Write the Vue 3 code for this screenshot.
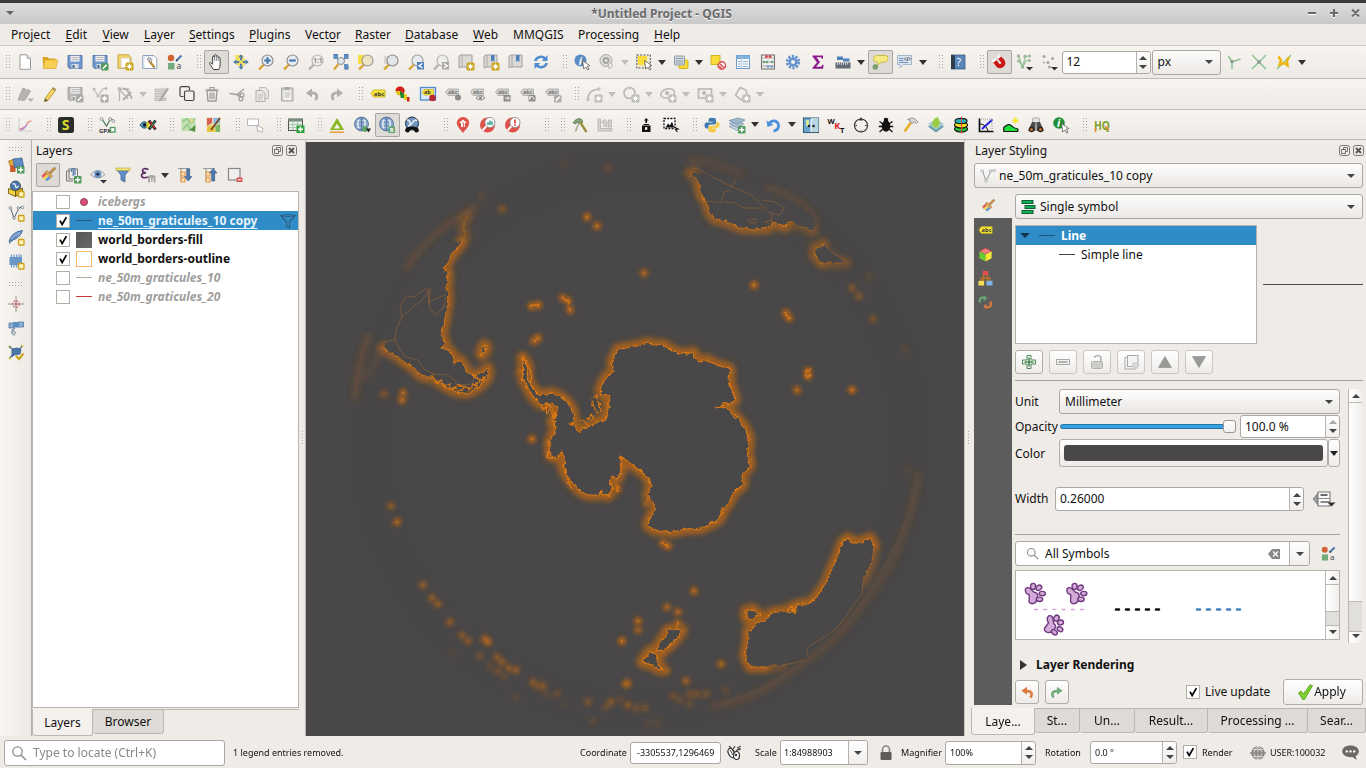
<script setup>
// ---------- icon fragments, all on a 16 x 16 grid ----------
const star = (c = '#c9a21b') => `<rect x="8.5" y="8.500" width="8" height="8" rx="1.500" fill="${c}"/><path d="M12.500 9.700v5.600M9.700 12.500h5.600M10.600 10.600l3.800 3.800M14.400 10.600l-3.800 3.800" stroke="#fff" stroke-width="1"/>`
const plus = '<rect x="9" y="9" width="7.500" height="7.500" rx="1" fill="#4f9a5c"/><path d="M12.750 10.300v5M10.250 12.800h5" stroke="#fff" stroke-width="1.500"/>'
const pencil = c => `<rect x="9" y="9" width="7.500" height="7.500" rx="1.500" fill="${c}"/><path d="M10.800 14.700l3.800-3.800" stroke="#fff" stroke-width="1.600"/>`
const ybox = '<rect x="10.500" y="10.500" width="5.500" height="5.500" rx=".8" fill="#fdf3b4" stroke="#c9a21b" stroke-width="1.300"/>'
const cursor = '<path d="M8.500 6.500l1.200 8.500 2-2 2 3 1.300-.9-1.900-2.800 2.600-.8z" fill="#fff" stroke="#555" stroke-width=".8"/>'
const floppy = (a, b) => `<path d="M1 1.500h14v13H2.500L1 13z" fill="${a}" stroke="${b}" stroke-width=".8"/><rect x="3.500" y="1.800" width="9" height="5.700" fill="#eee"/><path d="M4.500 3.500h7M4.500 5.500h7" stroke="#aaa" stroke-width=".8"/><rect x="4.500" y="10" width="7" height="4.500" fill="#d8dadd"/><rect x="5.500" y="11" width="2" height="3" fill="${b}"/>`
const lens = (fill, stroke, handle, inner = '') => `<path d="M6 10.500L1 15.500" stroke="${handle}" stroke-width="2.400"/><circle cx="9.500" cy="6.500" r="5.500" fill="${fill}" stroke="${stroke}" stroke-width="1.100"/>${inner}`
const tag = (x = 0, g = '#d3d1ce', s = '#aaa', t = '#777') => `<path d="M${x + 0.500} 6l2.500-3h10.500v6.500H${x + 3}z" fill="${g}" stroke="${s}" stroke-width=".8"/><text x="${x + 3}" y="8" font-size="5.500" font-weight="700" fill="${t}">abc</text>`
const page = (x, y, c) => `<path d="M${x} ${y}h6l3 3v8h-9z" fill="#e9e7e4" stroke="${c}" stroke-width="1"/>`
const down = '<path d="M10 13h7l-3.500 3.500z" fill="#333"/>'
const globe = (f, s) => `<circle cx="7.500" cy="7" r="6.900" fill="${f}" stroke="${s}" stroke-width=".9"/><path d="M1 7h13M2.500 3.500h10M2.500 10.500h10" fill="none" stroke="#b9cce0" stroke-width=".7"/><path d="M5 2.500q-2.500 4.500 0 9M10 2.500q2.500 4.500 0 9" fill="none" stroke="#e6eef6" stroke-width="1.500"/><path d="M7.500.5v13" stroke="${s}" stroke-width=".8"/>`
const brush = '<g transform="rotate(45 8 8)"><path d="M6.900-1.500q1.100-1.500 2.200 0V6H6.900z" fill="#c98f4a" stroke="#96642c" stroke-width=".5"/><path d="M4 5.500h8v3H4z" fill="#d9a663" stroke="#96642c" stroke-width=".5"/><path d="M4 8.500h2.700V14L4 13z" fill="#e25a55"/><path d="M6.700 8.500h2.600v5l-2.600.8z" fill="#f2d84f"/><path d="M9.300 8.500H12v4l-2.700 1.200z" fill="#5f97d8"/></g>'
const styleMgr = '<circle cx="4" cy="4" r="3.200" fill="#cf6234"/><rect x="1" y="9" width="6.500" height="6.500" fill="#74ab7c"/><path d="M9 7l5.500-5.500" stroke="#4a78ad" stroke-width="2.200"/><path d="M9 7l2-.3-1.500-1.500z" fill="#333"/><text x="9.500" y="15.200" font-size="8.500" fill="#444">a</text>'
const vee = c => `<path d="M2.500 3L6 13 11 3l3-1" fill="none" stroke="${c}" stroke-width="1"/><circle cx="2.300" cy="3" r="1.300" fill="#fff" stroke="${c}" stroke-width=".7"/><circle cx="6" cy="13" r="1.300" fill="#fff" stroke="${c}" stroke-width=".7"/><circle cx="10.500" cy="3" r="1.300" fill="#fff" stroke="${c}" stroke-width=".7"/><circle cx="14.500" cy="2.500" r="1.300" fill="#fff" stroke="${c}" stroke-width=".7"/>`
const fourDots = '<g fill="#d9d441"><circle cx="2" cy="3" r="1.500"/><circle cx="14" cy="2" r="1.500"/><circle cx="2" cy="14" r="1.500"/></g>'

const G = '#a9a7a4'
const icons = {
  newp: '<path d="M3 .8h7l3.500 3.500v11H3z" fill="#fff" stroke="#999" stroke-width="1"/><path d="M10 .8v3.500h3.500" fill="#ddd" stroke="#999" stroke-width=".8"/>',
  open: '<path d="M.5 3h5l1.500 1.500h6.500V14H1.500z" fill="#d9a420"/><path d="M3 6h12.800l-2 8.500H1.300z" fill="#f8cf52" stroke="#dba92c" stroke-width=".7"/>',
  save: floppy('#7199cf', '#45699a'),
  saveas: floppy('#7199cf', '#45699a') + pencil('#4f9a5c'),
  laynew: '<path d="M1 .8h10.500l2.500 3v10.500H1z" fill="#f4d667" stroke="#b99628" stroke-width=".8"/><rect x="4" y="4" width="8.500" height="9.500" fill="#fff" stroke="#c9c9c9" stroke-width=".7"/>' + star(),
  laymgr: '<path d="M.8 1.500h11l3 3v10H.8z" fill="#fff" stroke="#8ba3bf" stroke-width="1"/><path d="M2 13V3h9" stroke="#b9cbe0" fill="none" stroke-width="1.200" stroke-dasharray="1 1"/><path d="M7 6.500l5.500 7" stroke="#b98e2d" stroke-width="2.300"/><path d="M5 5.500a2.500 2.500 0 1 1 3.500 3L6.500 6z" fill="#c9cdd2" stroke="#777" stroke-width=".7"/>',
  style: styleMgr,
  hand: '<path d="M5.500 15.500L1.800 10c-.8-1.400.8-2 1.600-.9l1.200 1.200V3c0-1.300 1.700-1.300 1.800 0V1.500c.1-1.200 1.800-1.200 1.900 0v1c.2-1.100 1.800-1 1.900.2V4c.3-1 1.900-.9 1.900.3V11c0 2-.8 3-1.300 4.500z" fill="#fff" stroke="#333" stroke-width=".9"/><path d="M6.400 3v4M8.300 2.500V7M10.200 4v3" stroke="#555" stroke-width=".7"/>',
  pan: '<path d="M2 1h8l3 8-4 5-6-4z" fill="#f3df62"/><path d="M8 .2l2.600 3.300H5.400zM8 15.800l2.600-3.300H5.400zM.2 8l3.300-2.600v5.200zM15.800 8l-3.300-2.600v5.200z" fill="#4d78ab"/><path d="M8 3.500v2.800M8 9.800v2.700M3.500 8h2.800M9.800 8h2.700" stroke="#4d78ab" stroke-width="2"/>',
  zin: lens('#e5ecf3', '#888', '#d8a432', '<path d="M9.500 3.200v6.600M6.200 6.500h6.600" stroke="#4677ad" stroke-width="2.200"/>'),
  zout: lens('#e5ecf3', '#888', '#d8a432', '<path d="M6.200 6.500h6.600" stroke="#4677ad" stroke-width="2.200"/>'),
  z11: lens('#efedeb', '#b5b3b0', '#b5b3b0', '<text x="5.300" y="9" font-size="6.500" font-weight="700" fill="#8d8b88">1:1</text>'),
  zfull: '<path d="M.5 0h5l-5 5zM15.500 0v5l-5-5zM15.500 15.500h-5l5-5z" fill="#4778b0"/><g fill="#5e8bc0"><rect x="1" y="1" width="4" height="4"/><rect x="11" y="1" width="4" height="4"/><rect x="11" y="10" width="4" height="4"/></g><circle cx="8" cy="7" r="3.500" fill="#dfe6ec" stroke="#888"/><path d="M5.500 10l-4.500 5.500" stroke="#d8a432" stroke-width="2.200"/>',
  zsel: '<rect x="0" y="1" width="9" height="9" fill="#f6de45"/>' + lens('#ebe4c3', '#999', '#d8a432'),
  zlay: '<path d="M1 2h7v8H1z" fill="#ccc" opacity=".7"/>' + lens('#e3e6e8', '#888', '#d8a432'),
  zlast: lens('#e9ebed', '#999', '#d8a432', '<rect x="9" y="8" width="7" height="7.500" fill="#5083bd"/><path d="M14.500 9.500l-3.500 2.200 3.500 2.300" fill="none" stroke="#fff" stroke-width="1.400"/>'),
  znext: lens('#efedeb', '#b5b3b0', '#b5b3b0', '<rect x="9" y="8" width="7" height="7.500" fill="#aaa8a5"/><path d="M10.800 9.500l3.500 2.200-3.500 2.300" fill="none" stroke="#fff" stroke-width="1.400"/>'),
  map1: '<path d="M1 2l2-1h11v12H3l-2 1z" fill="#dcdad7" stroke="#999" stroke-width=".9"/><path d="M4 1v12" stroke="#aaa"/>' + star(),
  map2: '<path d="M1 2l2-1h11v12H3l-2 1z" fill="#dcdad7" stroke="#999" stroke-width=".9"/><path d="M4 1v12" stroke="#aaa"/><path d="M8 1h3.500v7L9.700 6.500 8 8z" fill="#4d7fba"/>' + star(),
  map3: '<path d="M1 2l2-1h11v12H3l-2 1z" fill="#dcdad7" stroke="#999" stroke-width=".9"/><path d="M4 1v12" stroke="#aaa"/><path d="M8 1h3.500v7L9.700 6.500 8 8z" fill="#4d7fba"/>',
  refresh: '<path d="M2.300 7A5.800 5.800 0 0 1 12 4.500M13.700 9A5.800 5.800 0 0 1 4 11.500" fill="none" stroke="#4f8ccd" stroke-width="2.600"/><path d="M14.500 1v6H8.800zM1.500 15V9h5.700z" fill="#4f8ccd"/>',
  ident: '<circle cx="6.500" cy="6.500" r="6" fill="#5a8bc2"/><text x="4.800" y="10.500" font-size="10.500" font-weight="700" font-style="italic" fill="#fff">i</text>' + cursor,
  action: '<circle cx="7" cy="6.500" r="6" fill="#dedcd9" stroke="#aaa"/><circle cx="7" cy="6.500" r="2.500" fill="none" stroke="#999" stroke-width="1.500"/><path d="M9 7l1 8 4-3z" fill="#eee" stroke="#aaa" stroke-width=".8"/>',
  select: '<rect x=".8" y="1" width="13.500" height="13" fill="#f0ead0" stroke="#555" stroke-width="1.100" stroke-dasharray="2 1.300"/><path d="M2 2h9v9H2z" fill="#f8dd36"/>' + cursor,
  selval: '<rect x="6" y="6" width="9" height="8.500" rx="1" fill="#f8dd36" stroke="#cfae1f"/><rect x="1.500" y="2" width="10" height="9" rx="1" fill="#d5d8da" stroke="#8b98a5"/><path d="M3 4.500h7M3 7h7M3 9h7" stroke="#8da0b3"/>',
  desel: '<rect x="1" y="1.500" width="9" height="9" fill="#f8dd36" stroke="#cfae1f" stroke-width=".9"/><circle cx="11.800" cy="11.500" r="3.700" fill="#fff" stroke="#d9474b" stroke-width="1.400"/><path d="M9.500 9.500l4.600 4M9.200 12l2.600 2.500" stroke="#d9474b" stroke-width="1.300"/>',
  table: '<rect x="1.500" y="1.500" width="13" height="13" fill="#fff" stroke="#6a9bc9" stroke-width="1"/><rect x="1.500" y="1.500" width="13" height="3.500" fill="#7fb1dd"/><path d="M3 7.500h3M3 10h3M3 12.500h3M8 7.500h5M8 10h5M8 12.500h5" stroke="#88acd0" stroke-width="1.200"/><path d="M6.800 1.500v13" stroke="#a9c7e2"/>',
  abacus: '<rect x="1.500" y="1" width="13" height="14" fill="none" stroke="#777" stroke-width="1.100"/><path d="M2 4h12M2 8h12M2 12h12" stroke="#999" stroke-width=".8"/><g fill="#d9474b"><circle cx="6.500" cy="2.500" r="1.500"/><circle cx="10" cy="2.500" r="1.500"/></g><g fill="#62a476"><circle cx="4" cy="8" r="1.300"/><circle cx="7" cy="8" r="1.300"/><circle cx="12" cy="8" r="1.300"/></g><g fill="#6797cc"><circle cx="8" cy="12.500" r="1.300"/><circle cx="11.500" cy="12.500" r="1.300"/></g>',
  gear: '<circle cx="8" cy="8" r="5.600" fill="none" stroke="#6796cf" stroke-width="3.200" stroke-dasharray="2.200 1.300"/><circle cx="8" cy="8" r="4.600" fill="#6796cf"/><circle cx="8" cy="8" r="2" fill="#f2efec"/>',
  sigma: '<path d="M2.500 1.500h10.500v3.300h-1.300c-.2-1.200-.7-1.500-2-1.500H6.500L10 8l-4 4.700h4c1.500 0 2-.5 2.300-1.900h1.300l-.5 4H2.500v-1L7 8.500 2.500 2.600z" fill="#8b1a8b"/>',
  measure: '<rect x=".5" y="8.500" width="15" height="6" fill="#636b75"/><path d="M2.500 8.500v2.500M4.500 8.500v2M6.500 8.500v2.500M8.500 8.500v2M10.500 8.500v2.500M12.500 8.500v2" stroke="#fff" stroke-width=".7"/><path d="M2 2.500h6v2h6.500v3H8V6H2z" fill="#4f80b7"/>',
  tip: '<path d="M4.500 1.500h9q2.500 0 2.500 2.700T13.500 8H9.500L5 11.500 6 8H4Q1.500 8 1.500 4.800T4.500 1.500z" fill="#f6ea82" stroke="#c9ba3d" stroke-width=".9"/><circle cx="3.300" cy="13" r="2.300" fill="#7aa874" stroke="#557f52" stroke-width=".7"/>',
  html: '<path d="M.5 1.500h14v9h-8L3 14v-3.500H.5z" fill="#dce6f1" stroke="#9ab0c7" stroke-width=".9"/><path d="M2 4.500h4.500M2 6.500h4.500M2 8.500h9" stroke="#6d93bd"/><path d="M9 3.500L7.500 5 9 6.500M12 3.500L13.500 5 12 6.500M11 3l-1 4" stroke="#333" stroke-width=".8" fill="none"/>',
  help: '<rect x="1.500" y="1" width="13.500" height="14" fill="#5886bd" stroke="#3d5d85" stroke-width=".8"/><rect x="1" y="1" width="4" height="14" fill="#2e3d50"/><text x="6.500" y="12" font-size="10.500" fill="#fff">?</text>',
  magnet: '<path d="M3.300 6.500l3.400 4.600a3.200 3.200 0 0 0 4.800-4.300L8 3" fill="none" stroke="#cb1515" stroke-width="4"/><path d="M1.500 7.500l3.500-2.200M6.300 4.200l3.200-2.600" stroke="#fff" stroke-width="2.200"/>',
  snapv: '<g fill="#a7b0a7"><circle cx="2.500" cy="2" r="1.700"/><circle cx="2.500" cy="7" r="1.500"/><circle cx="9" cy="2.500" r="1.700"/><circle cx="13.500" cy="2" r="1.600"/><circle cx="13.500" cy="6.500" r="1.500"/><circle cx="6.500" cy="13" r="1.800"/></g><path d="M2.500 2l4 11 3-10.500L14 2M3 7l3.500 6 4-6.500h3" fill="none" stroke="#8fbf94" stroke-width="1.100"/>' + down,
  dots: '<g fill="#aaa8a5"><circle cx="3" cy="2.500" r="1.600"/><circle cx="11.500" cy="4.500" r="1.600"/><circle cx="7" cy="8.500" r="1.600"/><circle cx="3" cy="8.500" r="1"/><circle cx="8.500" cy="13" r="1.600"/></g>' + down,
  topo: '<path d="M6 15V8L2.500 2M6 8l8.500-3" fill="none" stroke="#8cc492" stroke-width="1.600"/><circle cx="6" cy="7.500" r="1.800" fill="#999"/>',
  inter: '<path d="M1 1l14 14M15 1L1 15" stroke="#8cc492" stroke-width="1.500"/><circle cx="8" cy="8" r="2" fill="#999"/>',
  trace: '<path d="M15 1L1 15" stroke="#8cc492" stroke-width="1.400"/><path d="M2.500 2.500L5 6.500 3.500 10.500 8 9l3.500 2.500L11 7l2-4" fill="none" stroke="#efb50c" stroke-width="2.400"/>',
  // row 2
  edits: '<path d="M1 14L6 2l3 1.500L4 14zM5 14.500l5.500-11 3 1.500L8 14z" fill="#b7b5b2" stroke="#9d9b98" stroke-width=".8"/><path d="M10.500 12.500h6.500l-3.200 3.500z" fill="#b5b3b0"/>',
  edit: '<path d="M3 12.500L11 1.500l3 2-8 11-3.500 1.200z" fill="#f3d35c" stroke="#b08f27" stroke-width=".8"/><path d="M11 1.500l3 2-1 1.500-3-2z" fill="#a98a66"/><path d="M3 12.500l3 2-3.500 1.200z" fill="#555"/>',
  saveE: floppy('#b9b7b4', '#999') + pencil(G),
  addf: '<path d="M2 3l4 7 5-7 3-1" fill="none" stroke="#bbb" stroke-width="1.200"/><g fill="#bbb"><circle cx="2" cy="3" r="1.500"/><circle cx="14" cy="2.500" r="1.500"/><circle cx="6" cy="10" r="1.500"/></g>' + star('#aaa'),
  vtool: '<path d="M2.500 3v12M3 3h10M3 4l8 9" stroke="#b5b3b0" stroke-width="1.200" fill="none"/><path d="M6 2.500l4 1 5 9M14 6l-8 8" stroke="#b0aeab" stroke-width="1.900" fill="none"/><circle cx="2.500" cy="3" r="2" fill="#bbb"/>',
  multi: '<path d="M1 3h11v3H1zM1 7.500h9v3H1zM1 12h11v2.500H1z" fill="#d4d2cf" stroke="#b5b3b0" stroke-width=".7"/><path d="M5 14L13 1.500l2 1.300L7.500 14.500l-3 1z" fill="#aaa"/>',
  copyf: '<path d="M4.500 10.500H2.500Q1 10.500 1 9V2Q1 .7 2.500.7H9q1.500 0 1.500 1.500v2" fill="none" stroke="#444" stroke-width="1.200"/><rect x="5.500" y="5" width="9.500" height="9.500" rx="1.500" fill="none" stroke="#444" stroke-width="1.200"/>',
  del: '<path d="M3 4.500h10l-1 10.500H4z" fill="none" stroke="#9b9996" stroke-width="1.300"/><path d="M1.500 4h13M6 3.500V1.500h4v2M6 6.500v6.500M8 6.500v6.500M10 6.500v6.500" fill="none" stroke="#9b9996" stroke-width="1.200"/>',
  cut: '<path d="M.5 7.500L11 9M15 3L8 8.500l3 3" stroke="#a09e9b" stroke-width="1.300" fill="none"/><circle cx="13" cy="9" r="1.900" fill="none" stroke="#a09e9b" stroke-width="1.200"/><circle cx="12" cy="13" r="1.900" fill="none" stroke="#a09e9b" stroke-width="1.200"/>',
  copy: page(5.500, 1.500, '#bbb') + page(2, 4.500, '#b3b1ae') + '<path d="M4 9h5M4 11h5M4 13h4" stroke="#bbb"/>',
  paste: '<path d="M2.500 2h11.500v13H2.500z" fill="#d5d3d0" stroke="#aaa"/><rect x="4.500" y="4.500" width="7.500" height="9.500" fill="#f2f0ee"/><path d="M5.500 1h5v3h-5z" fill="#aaa"/><path d="M6 7h5M6 9h5M6 11h4" stroke="#bbb"/>',
  undo: '<path d="M11.500 14c3-4.500.5-7.500-4.500-7" fill="none" stroke="#b0aeab" stroke-width="2.700"/><path d="M8 2.500v9L2 7z" fill="#b0aeab"/>',
  redo: '<path d="M4.500 14c-3-4.500-.5-7.500 4.500-7" fill="none" stroke="#b0aeab" stroke-width="2.700"/><path d="M8 2.500v9L14 7z" fill="#b0aeab"/>',
  lab: '<path d="M1 7.500L3.500 4h11.500v7H3.500z" fill="#f8e63e" stroke="#c9ae18" stroke-width=".9"/><text x="3.800" y="9.700" font-size="6" font-weight="700" fill="#333">abc</text>',
  dia: '<circle cx="5" cy="5" r="4.500" fill="#e2c425"/><path d="M5 5V.5A4.500 4.500 0 0 0 .5 5zM5 5l4 2.500A4.500 4.500 0 0 0 5 .5z" fill="#d32020"/><path d="M5 5l4 2.500A4.500 4.500 0 0 1 5 9.500z" fill="#2a7a2c"/><path d="M5.500 8h3.500v4H5.500z" fill="#2a8a2c"/><path d="M9 8h3v6H9z" fill="#e8cb1b"/><path d="M12 11h2.500v4.500H12z" fill="#c82222"/>',
  labpin: '<rect x=".5" y="1.500" width="15" height="12.500" fill="#dbe8f7" stroke="#4e8ad0" stroke-width="1.300"/><path d="M2 6l2-2.500h9.500v5.500H4z" fill="#f8e63e" stroke="#c9ae18" stroke-width=".7"/><text x="4" y="8.300" font-size="5.500" font-weight="700" fill="#333">ab</text><circle cx="12.500" cy="12" r="3.300" fill="#b92b34"/>',
  lg1: tag() + '<circle cx="13" cy="11.500" r="3" fill="#8d8b88"/>',
  lg2: tag() + '<path d="M6 12q4.500-4.500 9 0q-4.500 4-9 0z" fill="#eee" stroke="#888"/><circle cx="10.500" cy="12" r="1.500" fill="#888"/>',
  lg3: tag() + '<rect x="8.500" y="9" width="7" height="6.500" fill="#8d8b88"/><path d="M10 12.200h4M12.500 10.500l1.800 1.700-1.800 1.700" fill="none" stroke="#fff"/>',
  lg4: tag() + '<rect x="8.500" y="9" width="7" height="6.500" rx="1" fill="#8d8b88"/><path d="M10 13.500a2 2 0 1 1 3.500 0M10 10v3.500" fill="none" stroke="#fff"/>',
  lg5: tag() + pencil('#b0aeab'),
  arc: '<path d="M2 13Q2 4 13 3" fill="none" stroke="#b9b7b4" stroke-width="1.600"/><circle cx="2" cy="13.500" r="1.700" fill="#c5c3c0"/><circle cx="13" cy="3" r="1.700" fill="#c5c3c0"/>' + star('#bdbbb8'),
  circ: '<circle cx="6.500" cy="7" r="5.500" fill="none" stroke="#b9b7b4" stroke-width="1.600"/><circle cx="6.500" cy="1.800" r="1.600" fill="#c5c3c0"/>' + star('#bdbbb8'),
  elli: '<ellipse cx="7.500" cy="7.500" rx="7" ry="4.500" fill="none" stroke="#b9b7b4" stroke-width="1.500" transform="rotate(-15 7 7)"/><circle cx="7" cy="7" r="2" fill="#b9b7b4"/>' + star('#bdbbb8'),
  rect: '<rect x="1.500" y="3" width="13" height="9" fill="none" stroke="#b9b7b4" stroke-width="1.600"/><circle cx="7" cy="7" r="2" fill="#b9b7b4"/><path d="M.5 2h3v3h-3z" fill="#c5c3c0"/>' + star('#bdbbb8'),
  poly: '<path d="M6 1.500l6 2.500 1 5-6 5-5.500-5z" fill="none" stroke="#b9b7b4" stroke-width="1.600"/>' + star('#bdbbb8'),
  // row 3
  prof: '<path d="M2 1v13h13" fill="none" stroke="#ccc"/><path d="M2.500 12c3-1 6-1 7-4s2-4 5-4" fill="none" stroke="#e07a7a" stroke-width="1.100"/><path d="M3 13.500c4-1 5-3 7-6" fill="none" stroke="#b08ae0" stroke-width="1.200"/>',
  ess: '<rect x="0" y="0" width="16" height="16" rx="2.500" fill="#2b2d2b"/><text x="3.700" y="13.300" font-size="14" font-weight="700" fill="#d5dc28">S</text>',
  gpx: '<path d="M3 2l4.500 7L11.500 2l2.500 1" fill="none" stroke="#4f7a5c" stroke-width="1.300"/><g fill="#e8e8e8" stroke="#888" stroke-width=".7"><circle cx="2.500" cy="2" r="1.500"/><circle cx="11" cy="2" r="1.500"/><circle cx="14.300" cy="4" r="1.500"/></g><text x="0" y="15.500" font-size="6" font-weight="700" fill="#333">GPX</text><rect x="11.500" y="10.500" width="4.500" height="4.500" fill="#fff" stroke="#4f9a5c" stroke-width="1.300"/>',
  fish: '<path d="M0 8q4-6.500 9 0q-5 6.500-9 0z" fill="#48a0d8" stroke="#1f4566" stroke-width="1"/><path d="M6.500 4.500h3v7h-3z" fill="#e2c92b"/><path d="M9 3.500l6.500 9M15.500 3.500l-6.500 9" stroke="#223" stroke-width="2.800"/><path d="M10 4.500l5 7" stroke="#cc2626" stroke-width="1.600"/><path d="M15 4.500l-5 7" stroke="#2f9a48" stroke-width="1.200"/><circle cx="4.500" cy="8" r="1.700" fill="#111"/>',
  mapg: '<rect x=".5" y="1" width="14" height="13" fill="#bfe0ae"/><path d="M1 5l5-3 4 4 4-4M2 12l5-5 2 7" stroke="#93c587" fill="none" stroke-width="1.400"/><path d="M9 1l4 2-3 3z" fill="#e6dc8a"/><path d="M8.500 13l6-5-.5 7z" fill="#4f8f3c"/>',
  maps: '<rect x=".5" y=".5" width="14" height="14.500" fill="#e9ddb7"/><path d="M1 1h5v5L1 9z" fill="#d9604f"/><path d="M7 1h7v5l-6 2z" fill="#8cbce4"/><path d="M1 10l6-2 3 7H1z" fill="#e9c53c"/><path d="M9 9l5-2v8h-4z" fill="#7bb864"/><path d="M14 1L5 13" stroke="#7a4a22" stroke-width="1.800"/>',
  tt: '<rect x=".5" y="2" width="11" height="6.500" fill="#fff" stroke="#bbb"/><path d="M10 8l.5 7 1.500-1.500 3 2 1-4-3-1.500z" fill="#fff" stroke="#aaa" stroke-width=".9"/>',
  tblp: '<rect x=".5" y="2" width="14" height="11.500" fill="#e8efe8" stroke="#555"/><rect x=".5" y="2" width="14" height="2.500" fill="#77927b"/><path d="M1 7.500h13M1 10.500h13M5 4v9M9.500 4v9" stroke="#a3c2a5" stroke-width=".9"/><rect x="8.500" y="8.500" width="8" height="7.500" fill="#2fa23c"/><path d="M12.500 9.800v5M10 12.300h5" stroke="#fff" stroke-width="1.600"/>',
  tri: '<path d="M8 1L15 13H1z" fill="#86b521"/><path d="M8 6.500l3 5H5z" fill="#f5f3f0"/><path d="M1 15.200h14" stroke="#e89a3e" stroke-width="1.500"/>',
  gl1: globe('#7d9fc7', '#4d6c95') + '<circle cx="11" cy="12" r="3" fill="#5fa46c"/><path d="M12 11.500h5l-2.500 4z" fill="#222"/>',
  gl2: globe('#7d9fc7', '#4d6c95') + '<rect x="9.500" y="9.500" width="6.500" height="6.500" fill="#5fa46c"/><text x="10.700" y="15" font-size="6" font-weight="700" fill="#fff">R</text>',
  gl3: '<circle cx="8" cy="6.500" r="6.500" fill="#6f94bd" stroke="#1f2d40"/><path d="M3 3q3 0 3 3t3-1q2-3 4-1M4 9l3-1" stroke="#e2edf5" stroke-width="1.700" fill="none"/><path d="M2.500 10.500l4-1h3l4 1 1 3H10l-2-1.500-2 1.500H1.500z" fill="#111"/><circle cx="3.500" cy="13.300" r="2.300" fill="#111"/><circle cx="12.500" cy="13.300" r="2.300" fill="#111"/>',
  pinr: '<path d="M8 16C5 12 1.800 9.500 1.800 5.800a6.200 5.800 0 0 1 12.400 0C14.200 9.500 11 12 8 16z" fill="#dc5248"/><path d="M8 2.500L4 6h2v4h4V6h2z" fill="#fff"/><path d="M7.300 6h1.400v4" stroke="#dc5248" fill="none"/>',
  bub1: '<circle cx="7.500" cy="8" r="7.500" fill="#dc5248"/><circle cx="10" cy="5.500" r="5" fill="#fff" stroke="#999"/><path d="M6.500 9l-4 4.500" stroke="#fff" stroke-width="2"/><path d="M8 8V5M10 8V3.500M12 8V4.500" stroke="#39a08c" stroke-width="1.500"/>',
  bub2: '<circle cx="7.500" cy="8" r="7.500" fill="#dc5248"/><circle cx="10" cy="5.500" r="5" fill="#fff" stroke="#999"/><path d="M6.500 9l-4 4.500" stroke="#fff" stroke-width="2"/><path d="M10 2.500v4M10 7.300v1.500" stroke="#dc3228" stroke-width="1.600"/>',
  ham1: '<path d="M1 5.500Q5 .5 9 2l2 3-3 2-2-2-3 2z" fill="#86a176" stroke="#56713f" stroke-width=".8"/><path d="M8 5l6.500 10" stroke="#9c8f3b" stroke-width="2.300"/><path d="M7 6l-3.500 8.500" stroke="#a8b09b" stroke-width="1.800"/>',
  ham2: '<path d="M1 2h2.500v9.500H15V14H1zM5 4.500l3-2 2 2v5H7V6H5zM11.500 3h3v7h-3z" fill="#d6d4d1" stroke="#b3b1ae" stroke-width=".8"/>',
  lock2: '<rect x="4" y="8.500" width="8.500" height="6.500" fill="#111"/><rect x="7" y="10.200" width="2.300" height="2.600" fill="#fff"/><path d="M8.200 1l2.300 2.500H9V6H7.400V3.500H6z" fill="#111"/><path d="M5.500 7.500h5.500" stroke="#111"/>',
  crop: '<rect x="1" y="1.500" width="11" height="10" fill="#fff" stroke="#111" stroke-width="1.300" stroke-dasharray="2 1.200"/><path d="M2.500 10.500l2.500-4 2 2 2-4 2 6z" fill="#111"/><path d="M9 9l6 3-2.500.5 2 2.500" fill="#fff" stroke="#111" stroke-width="1.200"/>',
  py: '<path d="M8 .8c-3 0-3.500 1-3.500 2.500v1.500h4v.7H2.800C1 5.500.5 7 .5 8.500s.6 3 2.300 3h1.500V9.700c0-1.300 1-2.200 2.200-2.200h3.800c1 0 1.700-.8 1.700-1.800V3.200C12 1.500 11 .8 8 .8z" fill="#3f7bb0"/><path d="M8.500 15.500c3 0 3.500-1 3.500-2.500v-1.500H8v-.7h5.500c1.700 0 2-1.500 2-3s-.6-3-2-3h-1.200v1.800c0 1.300-1 2.200-2.200 2.200H6.300c-1 0-1.800.8-1.800 1.800V13c0 1.700 1 2.500 4 2.500z" fill="#f5cb46"/>',
  lay3: '<path d="M0 9.500l8 4 7-4-7-2z" fill="#c2d0dc" stroke="#7f98b0" stroke-width=".7"/><path d="M0 6.500l8 4 7-4-7-2z" fill="#b0c3d5" stroke="#7f98b0" stroke-width=".7"/><path d="M0 3.500l9-2.500 7 2-8 4.500z" fill="#9fb7cd" stroke="#6d89a5" stroke-width=".7"/>' + plus,
  undob: '<path d="M3.500 6a5 5 0 1 1 4 7.800" fill="none" stroke="#4c8ede" stroke-width="2.800"/><path d="M.5 3.500l1 6.500 6-2.300z" fill="#4c8ede"/>',
  sign: '<rect x=".5" y="1" width="15" height="14.500" fill="#6ba6d3" stroke="#3c5e77" stroke-width="1.100"/><path d="M8 1h7.500v14H8z" fill="#b5d5df"/><path d="M3 3h3v6H3z" fill="#d8e59b"/><circle cx="6" cy="9" r="1.300" fill="#222"/><circle cx="10.500" cy="9" r="1.300" fill="#222"/><path d="M8 2v13" stroke="#fff"/>',
  wkt: '<text x="-.5" y="6.500" font-size="7.500" font-weight="700" fill="#111">W</text><text x="6.200" y="12" font-size="9" font-weight="700" fill="#e01b1b">K</text><text x="12" y="15.500" font-size="7.500" font-weight="700" fill="#111">T</text>',
  compass: '<circle cx="8" cy="8.500" r="6.500" fill="none" stroke="#333" stroke-width="1.200"/><path d="M8 0l2 3.500H6z" fill="#333"/><path d="M8 13.500v1.500M2.500 8.500H4M12 8.500h1.500" stroke="#333"/>',
  bug: '<ellipse cx="8" cy="9" rx="4.300" ry="5.700" fill="#111"/><circle cx="8" cy="3" r="2.300" fill="#111"/><path d="M1.500 4.500L5 7M14.500 4.500L11 7M.8 9.500H15.200M1.500 15L5 12M14.500 15L11 12" stroke="#111" stroke-width="1.300"/>',
  ham3: '<path d="M8.500 5L1.500 14.500" stroke="#eab02b" stroke-width="2.700"/><path d="M4.500 2.500q4-2.500 7-1l3.500 3.500-1.500 1.500-2.500-1.500L9 6.500 6.500 4.500 7.500 3z" fill="#d5d7d9" stroke="#888" stroke-width=".8"/>',
  leaf: '<path d="M0 9.500l8-5 8 5-8 6z" fill="#5f9dac"/><path d="M0 7l8-5 8 5-8 6z" fill="#aec9cc"/><path d="M4 8Q4 2 9.500 0q4 5 1 9.500-3 3-6.500-1.500z" fill="#98cc45"/>',
  stack: '<ellipse cx="8" cy="12" rx="6.500" ry="3" fill="#2bc23a" stroke="#111" stroke-width="1.200"/><ellipse cx="8" cy="8" rx="6.500" ry="3" fill="#f0df24" stroke="#111" stroke-width="1.200"/><ellipse cx="8" cy="4" rx="6" ry="2.600" fill="#26b7b7" stroke="#111" stroke-width="1.200"/><path d="M8.500-.5v17" stroke="#e33" stroke-width=".9"/>',
  plot: '<path d="M1.500 1.500v13h14" fill="none" stroke="#111" stroke-width="1.700"/><path d="M2 7q6 0 8 7" fill="#f0eac0" stroke="#111"/><path d="M4 12L14.500 2.500" stroke="#2323e0" stroke-width="2"/><path d="M3 2h11v11" fill="none" stroke="#999" stroke-dasharray="1 1"/>',
  terr: '<path d="M.8 10.500q5-5 8-1.500 2 2.500 6 3v2.500H.8z" fill="#1fe03a" stroke="#111" stroke-width="1.200"/><circle cx="12.500" cy="3.500" r="1.800" fill="#f7e51b"/><path d="M12.500 0v7M9 3.500h7M10 1l5 5M15 1l-5 5" stroke="#f7e51b" stroke-width=".9"/>',
  bino: '<path d="M4.500 1.500q3.500-2 7 0v5h-7z" fill="#e2e2e2" stroke="#999" stroke-width=".7"/><path d="M4 5h3.500v9H0zM12 5H8.500v9H16z" fill="#4b4b4b"/><circle cx="3.500" cy="12.500" r="2.200" fill="#c8702c" stroke="#222" stroke-width="1.200"/><circle cx="12.500" cy="12.500" r="2.200" fill="#c8702c" stroke="#222" stroke-width="1.200"/>',
  infog: '<circle cx="6" cy="6" r="5.800" fill="#1f8f36"/><text x="4" y="10" font-size="10.500" font-weight="700" font-style="italic" fill="#fff">i</text>' + cursor,
  hq: '<text x="0" y="12.500" font-size="13" font-weight="700" fill="#7c9e2c" textLength="16" lengthAdjust="spacingAndGlyphs">HQ</text><path d="M1.500 11v4M11 9l4 4" stroke="#e78b35" stroke-width="1.600"/>',
  // left toolbar
  dsm: '<path d="M.5 4l6-2 3 8-6 3z" fill="#e0a93c" stroke="#a6771d" stroke-width=".7"/><path d="M2.500 8l5 1v6H2z" fill="#c85c2c"/><path d="M5 2l9-1 1.500 8-9 1.500z" fill="#5c8cc2" stroke="#3f6797" stroke-width=".8"/>' + plus,
  geop: '<circle cx="7.500" cy="5" r="5" fill="#4d78ab" stroke="#26384f" stroke-width=".8"/><path d="M4.500 3q3-1 3 2t3 0" stroke="#e5eef5" stroke-width="1.300" fill="none"/><path d="M.5 7.500l7 2.500v5.500l-7-3z" fill="#f2d444" stroke="#5b4b12" stroke-width=".8"/><path d="M14.500 7l-7 3v5.500l7-3.500z" fill="#dcae22" stroke="#5b4b12" stroke-width=".8"/>' + ybox,
  shp: vee('#56646f') + ybox,
  spl: '<path d="M1 13Q3 3 14.500 1.500 12 9 3.500 11.500z" fill="#7fa6d3" stroke="#41679a"/><path d="M1 15L9 6.500" stroke="#41679a" stroke-width=".9"/>' + ybox,
  mem: '<rect x="1.500" y="4" width="12.500" height="8" fill="#6b96c8"/><path d="M3.500 1.500v13M6 1.500v13M8.500 1.500v13M11 1.500v13M13 1.500v11" stroke="#6b96c8" stroke-width="1.200"/>' + ybox,
  cad: '<path d="M8 0v16M0 8h16" stroke="#888" stroke-width=".9"/><circle cx="8" cy="8" r="3.200" fill="none" stroke="#c66" stroke-width="1.200" stroke-dasharray="2 1"/><circle cx="8" cy="8" r="1" fill="#c44"/>',
  gps: '<path d="M1 3h5v5H1zM10.500 2h5v5h-5z" fill="#8aaed5" stroke="#50759f" stroke-width=".8"/><rect x="5.500" y="2" width="5.500" height="5.500" fill="#5c8cc2"/><path d="M7 8l-3 3q-1 3 3 4M4 9.500l4 4" stroke="#8b98a5" stroke-width="1.400" fill="none"/>',
  topc: fourDots + '<path d="M4 5l5-1 4 1-1 5-6 1-2 2z" fill="#4d78ab" stroke="#33557d" stroke-width=".8"/><path d="M1 2l3 3M14 2l-2 3M2 14l2-3" stroke="#4d78ab" stroke-width="1.300"/><path d="M8 12l3 3 4.500-5.500" fill="none" stroke="#c9a21b" stroke-width="2.200"/>',
  // layer panel toolbar
  brush,
  grp: '<path d="M5 4H1.500v10H8" fill="none" stroke="#777"/><rect x="4" y="2" width="8.500" height="10" fill="none" stroke="#777"/><path d="M8.200 3v6M6.500 5V2.500q1.700-2 3.400 0V8" fill="none" stroke="#4d78ab" stroke-width="1.200"/>' + plus,
  eye: '<path d="M.5 7.500q7-8 14.500 0-7 7-14.500 0z" fill="#eee" stroke="#999" stroke-width="1"/><circle cx="7.800" cy="7.200" r="3.600" fill="#6594c8"/><circle cx="7.800" cy="7.200" r="1.400" fill="#223"/>' + down,
  filt: '<path d="M1 2h14l-5 6v7l-4-2V8z" fill="#5f8fc6" stroke="#3f6797" stroke-width=".8"/><rect x="1" y="1" width="14" height="2.500" fill="#f3e27c" stroke="#b8a436" stroke-width=".6"/>',
  eps: '<path d="M8.500 2.500Q3 .5 2.500 3.500q0 2 3.500 2.300-4.500.3-4.500 2.700 0 3.500 7 1.500" fill="none" stroke="#5c2e66" stroke-width="1.700"/><path d="M8 9q4-2 7.500 0v6.500h-2V11h-1v3.500h-1.500V11H10v4.500H8z" fill="#aaa8a5"/>',
  exp: '<path d="M1 1.500h12M4 2v12" stroke="#999" stroke-width="1.100"/><rect x="4" y="5" width="4" height="4" fill="#fbe2bf" stroke="#e2933c"/><rect x="4" y="11" width="4" height="4" fill="#fbe2bf" stroke="#e2933c"/><path d="M9.700 2h3v7.500H15L11.200 14 7.500 9.500h2.200z" fill="#4d78ab" stroke="#34587f" stroke-width=".6"/>',
  col: '<path d="M1 1.500h12M4 2v12" stroke="#999" stroke-width="1.100"/><rect x="4" y="5" width="4" height="4" fill="#fbe2bf" stroke="#e2933c"/><rect x="4" y="11" width="4" height="4" fill="#fbe2bf" stroke="#e2933c"/><path d="M9.700 14h3V6H15L11.200 1.500 7.500 6h2.200z" fill="#4d78ab" stroke="#34587f" stroke-width=".6"/>',
  rem: '<rect x="1.500" y="1.500" width="11.500" height="11.500" fill="#f2f0ee" stroke="#888" stroke-width="1.200"/><rect x="9.500" y="10.500" width="6" height="4.500" rx="1" fill="#e0484f"/><path d="M10.700 12.700h3.600" stroke="#fff" stroke-width="1.200"/>',
  funnel: '<path d="M1 2.500q7 2 14 0l-5.500 6.500v6l-3-1.500V9z" fill="none" stroke="#2a5f88" stroke-width="1.200"/><path d="M1 2.500q7-2 14 0" fill="none" stroke="#2a5f88"/>',
  // styling dock
  line: vee('#999'),
  single: '<g fill="#0db257" stroke="#145c35" stroke-width="1"><rect x="1" y="1.500" width="11" height="3"/><rect x="4" y="6.500" width="10" height="3"/><rect x="1" y="11.500" width="11" height="3"/></g>',
  cube: '<path d="M8 1l6.500 3.500L8 8 1.500 4.500z" fill="#ee7d80" stroke="#a33" stroke-width=".7"/><path d="M1.500 4.500L8 8v7.500L1.500 12z" fill="#68ce32"/><path d="M14.500 4.500L8 8v7.500l6.500-3.500z" fill="#f6ea38"/>',
  diagt: '<path d="M6 4v7M10 4v7M3.500 11V7.500h9V11" stroke="#b8742c" stroke-width="1.700" fill="none"/><rect x="5" y="0" width="6" height="4.500" fill="#e0504f"/><rect x=".5" y="10.500" width="6" height="5" fill="#f4dd56"/><rect x="9" y="10.500" width="6.500" height="5" fill="#7fb0e6"/>',
  hist: '<path d="M8 3.500Q1 1 2 8" fill="none" stroke="#6aa27a" stroke-width="2.500"/><path d="M6 0l4 3.500L6 7z" fill="#6aa27a"/><path d="M13 7q3 7-5 6" fill="none" stroke="#d97742" stroke-width="2.500"/><path d="M9 9v6.500L5.500 12z" fill="#d97742"/>',
  badd: '<path d="M6 1.500h4V6h4.500v4H10v4.500H6V10H1.500V6H6z" fill="none" stroke="#4b8a57" stroke-width="1"/><path d="M8 3.500v9M3.500 8h9" stroke="#4b8a57" stroke-width="1.600"/>',
  bmin: '<rect x="1.500" y="5.500" width="13" height="5" fill="#f2f0ee" stroke="#aaa"/><rect x="3.500" y="7" width="9" height="2" fill="#b5b3b0"/>',
  block: '<rect x="2.500" y="7.500" width="11" height="7" rx="1" fill="#cfcdca" stroke="#b5b3b0"/><path d="M5 3.500q4-4 7 0v4" fill="none" stroke="#b5b3b0" stroke-width="1.600"/>',
  bdup: '<path d="M4 3.500H2v11.500h11v-2" fill="none" stroke="#aaa"/><rect x="4.500" y="1.500" width="10.500" height="11" fill="#f4f2f0" stroke="#aaa"/><rect x="10" y="9" width="5" height="4" fill="#e0deda" stroke="#bbb" stroke-width=".7"/>',
  bup: '<path d="M8 2.500l6.500 11h-13z" fill="#9c9a97" stroke="#888" stroke-width=".6"/>',
  bdn: '<path d="M8 13.500l6.500-11h-13z" fill="#9c9a97" stroke="#888" stroke-width=".6"/>',
  uo: '<path d="M12 14.500c3-5 .5-8-4.500-7.500" fill="none" stroke="#dd7a3f" stroke-width="3"/><path d="M8 2v9L1.500 6.500z" fill="#dd7a3f"/>',
  rg: '<path d="M4 14.500C1 9.500 3.500 6.500 8.500 7" fill="none" stroke="#72ad7c" stroke-width="3"/><path d="M8 2v9l6.500-4.500z" fill="#72ad7c"/>',
  ok: '<path d="M1.500 9l2.500-2 2.500 3L13 .8l2.500.9L7.500 15.500H5.800z" fill="#7dd02f" stroke="#4c9a1a" stroke-width=".8"/>',
  search: '<circle cx="6.500" cy="6.500" r="4.700" fill="none" stroke="#8d8b88" stroke-width="1.300"/><path d="M10 10l5 5" stroke="#8d8b88" stroke-width="1.500"/>',
  dd: '<path d="M5 2v12L0 8z" fill="#999" stroke="#777" stroke-width=".7"/><rect x="5" y="1" width="12" height="14" fill="#fafafa" stroke="#777"/><path d="M7.500 4h7" stroke="#444" stroke-width="1.600"/><path d="M5 7.500h12" stroke="#888"/><path d="M7.500 11h9" stroke="#444" stroke-width="1.200"/><path d="M14.500 11.500h8l-4 4z" fill="#333"/>',
  paw: '<g fill="#d3abd8" stroke="#713a80" stroke-width="1.100"><path d="M4 8q-3.500-1-3-4.500Q3 1 5.500 4q2 2.500 4 2.500 2 1.500.5 4.500 0 3.500-3.500 4Q3 15 4 11z" transform="translate(-.5 1)"/><ellipse cx="6.500" cy="2.500" rx="2" ry="2.400"/><ellipse cx="11" cy="3.500" rx="2.400" ry="1.900" transform="rotate(-35 11 3.500)"/><ellipse cx="13.700" cy="8" rx="2.400" ry="1.700"/><ellipse cx="11.500" cy="12.500" rx="2.500" ry="1.700"/></g>',
  // status bar
  mouse: '<path d="M3 1l3 3M9 1L7 4M1 7l4-1M14 3l-4 3" stroke="#444" stroke-width="1.200"/><ellipse cx="5.500" cy="8" rx="3" ry="5" fill="#fff" stroke="#333" stroke-width="1.200" transform="rotate(-25 5.500 8)"/><ellipse cx="10.500" cy="10.500" rx="3" ry="4" fill="#fff" stroke="#333" stroke-width="1.200"/><path d="M4 5l3 5M6 4l2 4" stroke="#333" stroke-width=".9"/><circle cx="10" cy="10" r="1.200" fill="#333"/><path d="M11 3l4-2M12 5l3-1" stroke="#333"/>',
  lock: '<path d="M4.500 8V4.500a3.500 3.500 0 0 1 7 0V8" fill="none" stroke="#8a8886" stroke-width="1.700"/><rect x="2.500" y="7" width="11" height="8" rx="1" fill="#5d5b59"/>',
  globe2: '<circle cx="8" cy="8" r="6.800" fill="#8a8886"/><path d="M1 8h14M2.500 4.500h11M2.500 11.500h11M8 1v14M8 1c-5 4-5 10 0 14M8 1c5 4 5 10 0 14" fill="none" stroke="#e6e4e2" stroke-width=".8"/><path d="M0 8h16" stroke="#666"/>',
  bubble: '<path d="M8 1.500c4.500 0 7.800 2.300 7.800 5.300 0 2-1 3.500-3 4.500l1 3.700-4-2.700c-6 .5-9.600-2.300-9.600-5.500C.2 3.800 3.500 1.500 8 1.500z" fill="#6b6967"/><g fill="#fff"><circle cx="4.500" cy="7" r="1.100"/><circle cx="8" cy="7" r="1.100"/><circle cx="11.500" cy="7" r="1.100"/></g>',
}

// '|' grip, 'v' menu arrow, 'V' greyed menu arrow, '_' gap, '!name' checked tool
const row1a = '| newp open save saveas laynew laymgr style | !hand pan zin zout z11 zfull zsel zlay zlast znext map1 map2 map3 refresh | ident action V select v selval v desel table abacus gear sigma measure v !tip html v | help | !magnet snapv dots'.split(' ')
const row1b = 'topo inter trace v'.split(' ')
const row2 = '| edits edit saveE addf vtool V multi copyf del cut copy paste undo redo | lab dia labpin lg1 lg2 lg3 lg4 lg5 | arc V circ V elli V rect V poly V'.split(' ')
const row3 = '| prof | ess | gpx | fish | mapg maps | tt | tblp | tri gl1 !gl2 gl3 _ | pinr bub1 bub2 _ | | ham1 ham2 | lock2 crop | py lay3 v undob v sign wkt compass bug ham3 leaf stack plot terr bino infog | hq'.split(' ')
const layerTools = '!brush grp eye filt eps v exp col rem'.split(' ')
const bars = [row2, row3]
const kind = t => ({ '|': 'grip', v: 'arr', V: 'arr off', _: 'gap' }[t] || (t[0] === '!' ? 'tool on' : 'tool'))
const art = t => icons[t.replace('!', '')] || ''
const menus = [['', 'Pro', 'j', 'ect', 54.5], ['', '', 'E', 'dit', 37], ['', '', 'V', 'iew', 41.5], ['', '', 'L', 'ayer', 45], ['', '', 'S', 'ettings', 60], ['', '', 'P', 'lugins', 56], ['', 'Vect', 'o', 'r', 50], ['', '', 'R', 'aster', 50], ['', '', 'D', 'atabase', 68], ['', '', 'W', 'eb', 40], ['', 'MMQGIS', '', '', 65], ['', 'Pro', 'c', 'essing', 76], ['', '', 'H', 'elp', 30]]
const lefts = ['dsm', 'geop', 'shp', 'spl', 'mem']
const lefts2 = ['cad', 'gps', 'topc']
const layers = [
  { n: 'icebergs', k: 'dot', off: true },
  { n: 'ne_50m_graticules_10 copy', k: 'ln', c: true, sel: true },
  { n: 'world_borders-fill', k: 'fill', c: true },
  { n: 'world_borders-outline', k: 'out', c: true },
  { n: 'ne_50m_graticules_10', k: 'ln tan', off: true },
  { n: 'ne_50m_graticules_20', k: 'ln red', off: true },
]

// ---------- map ----------
const antarctica = 'M635 346L641 345 648 343 655 345 663 345 667 347 672 351 680 353 688 354 693 352 695 357 697 362 702 360 707 360 713 363 717 365 723 367 727 367 730 370 729 380 732 390 735 400 730 403 723 404 716 407 727 408 731 413 735 416 743 425 747 432 749 438 748 450 747 458 750 466 745 471 742 476 743 485 735 491 731 498 727 506 722 507 722 514 718 520 710 524 702 528 693 529 685 529 678 531 672 532 663 531 655 530 648 526 649 520 651 516 656 509 653 502 648 495 650 490 652 486 649 480 645 475 640 470 635 467 627 461 620 457 622 466 620 473 617 480 612 476 609 480 612 485 612 491 608 496 604 495 602 492 598 495 588 495 580 491 575 486 570 480 566 474 563 468 565 460 562 452 557 458 551 456 550 447 551 438 557 427 552 422 556 415 558 407 552 404 540 404 535 399 531 394 528 388 524 381 522 373 524 366 522 358 526 362 528 367 527 373 529 381 532 387 536 392 540 395 546 394 552 393 559 396 565 400 570 406 573 412 574 422 570 424 575 426 579 432 583 429 588 427 597 422 605 419 608 411 608 404 611 395 606 396 601 393 600 389 602 385 606 377 612 373 613 367 612 362 615 355 618 349 625 348z'
const saTop = 'M468 216L463 223 464 230 465 236 462 242'
const saMain = 'M462 242L457 249 452 255 448 262 444 268 448 273 447 287 448 300 446 313 444 325 441 335 445 342 442 348 448 350 452 353 453 363 460 360 465 367 468 374 474 376 480 374 488 368 488 377 483 383 477 388 470 392 463 393 455 391 448 388 440 383 433 377 426 377 420 375 413 367 405 362'
const saWest = 'M405 362L394 355 383 348'
const afWest = 'M690 173L695 178 700 185'
const afMain = 'M700 185L700 191 702 197 707 202 709 212 715 219 725 221 733 225 742 228 755 229 768 228 773 223 785 227 788 221'
const afEast = 'M788 221L800 226 813 231'
const ausMain = 'M765 667L750 667 745 655 748 642 748 631 753 628 757 623 765 620 772 613 782 611 788 611 790 613 792 607 795 614 797 605 803 604 808 604 814 600 818 595 828 580 830 573 834 564 838 555 842 543 848 538 852 542 862 542 870 538 874 545'
const ausEast = 'M874 545L872 561 868 571 863 581'
const tas = 'M746 611L752 609 760 615 755 618 750 620 746 617z'
const nz1 = 'M668 630L676 629 682 630 679 635 675 640 668 647 663 651 656 650 660 643 664 637z'
const nz2 = 'M650 651L642 662 648 664 653 665 658 669 663 670 657 663 658 656z'
const falk = 'M481 353L484 345 486 346 485 352 482 355z'
const strong = [antarctica, tas, nz1, nz2, falk]
const coasts = [[saTop, .4], [saMain, .9], [saWest, .75], [afWest, .55], [afMain, .8], [afEast, .4], [ausMain, .95], ['M765 667L782 665', .4], [ausEast, .5], ['M823 244L820 247 815 248 814 255 822 263', .6], ['M822 263L833 263 846 263', .4]]
const faint = [['M407 267Q432 230 475 207', .2], ['M355 397Q357 366 368 337', .22], ['M383 348Q376 362 365 378', .15], ['M692 160Q715 162 741 174', .18], ['M768 188Q805 200 815 220L813 231', .2], ['M918 475Q914 515 892 561 873 594 842 631 810 662 762 691 738 702 715 706', .2], ['M823 244L832 252 846 262', .15], ['M690 173L696 168', .25]]
const thin = [
  'M383 342L395 340 396 330 402 317 413 307 420 302 427 294 428 290 429 300 430 308 435 315 443 308 446 297 M429 302L440 297 446 295 M402 317L400 307 406 296 414 297 425 289 431 289 428 303 M395 340L400 350 406 357 418 360 424 369 434 374 448 375 460 385 472 384 474 376',
  'M707 201L721 203 724 192 731 190 M724 202L735 203 744 208 762 208 M731 188L736 180 M762 200L775 202 785 208 M771 214L772 223 M748 220L756 219 756 223 750 223z M765 222L771 220 772 225z',
  'M692 168L698 169 722 182 751 195 770 213 780 215 784 208 M863 581L862 595 857 600 847 615 838 627 827 635 M827 635L807 648 807 655 M782 665L794 663 804 660 M823 244L832 252 846 262',
]
const spots = [[587,217,.8],[597,226,.8],[502,209,.4],[482,197,.15],[608,168,.2],[564,163,.1],[532,306,.9],[538,305,.9],[563,298,.8],[568,301,.8],[570,310,.8],[534,341,.8],[538,338,.8],[384,394,.4],[403,393,.75],[402,400,.75],[532,439,.85],[644,273,.7],[754,285,.85],[786,313,.8],[789,318,.8],[808,371,.8],[808,376,.8],[797,390,.75],[852,390,.85],[852,288,.4],[859,296,.4],[873,319,.35],[869,277,.15],[905,350,.12],[391,506,.5],[397,522,.7],[423,585,.5],[432,598,.5],[438,604,.5],[450,622,.5],[462,635,.45],[468,641,.45],[485,639,.65],[488,642,.65],[497,657,.45],[502,662,.5],[509,668,.5],[516,670,.5],[480,656,.3],[490,666,.2],[498,671,.3],[504,677,.2],[533,682,.45],[543,686,.45],[537,686,.3],[557,694,.25],[588,702,.35],[611,702,.45],[606,707,.25],[628,705,.45],[626,684,.75],[628,683,.4],[622,641,.85],[453,653,.1],[516,697,.15],[593,721,.15],[694,591,.75],[667,607,.65],[678,612,.7],[678,623,.6],[638,621,.75],[638,630,.65],[721,664,.7],[686,681,.6],[726,690,.2],[663,543,.8],[668,546,.8],[690,694,.35],[697,694,.35],[706,694,.35],[673,696,.3],[680,700,.25],[690,704,.25],[637,708,.3],[645,708,.3],[648,723,.12],[658,723,.15],[667,671,.4],[908,470,.1],[523,357,.6],[521,371,.6],[549,452,.7],[548,443,.4],[618,489,.6],[646,504,.5],[751,460,.5],[620,700,.2],[545,694,.15],[565,705,.1]]
</script>

<template>
  <div class="app">
    <header class="title"><i class="tri wm"></i><b>*Untitled Project - QGIS</b>
      <svg class="wb" viewBox="0 0 60 16"><path d="M4 9h8M26 9h8M30 5v8M48 5l7 7M55 5l-7 7" stroke="#fff" stroke-width="2" /><path d="M4 8h8M26 8h8M30 4v8M48 4.500l7 7M55 4.500l-7 7" stroke="#6a6a6a" stroke-width="2" /></svg>
    </header>
    <nav class="menu"><span v-for="m in menus" :key="m[1] + m[2] + m[3]" :style="{ width: m[4] + 'px' }">{{ m[1] }}<u>{{ m[2] }}</u>{{ m[3] }}</span></nav>
    <div class="bar b1">
      <span v-for="(t, i) in row1a" :key="i" :class="kind(t)"><svg v-if="art(t)" viewBox="0 0 16 16" v-html="art(t)"></svg></span>
      <div class="spin px"><span>12</span><em><i class="tri up"></i><i class="tri"></i></em></div>
      <div class="combo unit"><span>px</span><i class="tri"></i></div>
      <span v-for="(t, i) in row1b" :key="'b' + i" :class="kind(t)"><svg v-if="art(t)" viewBox="0 0 16 16" v-html="art(t)"></svg></span>
    </div>
    <div v-for="(r, n) in bars" :key="n" class="bar" :class="'b' + (n + 2)">
      <span v-for="(t, i) in r" :key="i" :class="kind(t)"><svg v-if="art(t)" viewBox="0 0 16 16" v-html="art(t)"></svg></span>
    </div>

    <main class="mid">
      <aside class="side">
        <i class="hgrip"></i>
        <svg v-for="t in lefts" :key="t" viewBox="0 0 16 16" v-html="icons[t]"></svg>
        <i class="hgrip second"></i>
        <svg v-for="t in lefts2" :key="t" viewBox="0 0 16 16" v-html="icons[t]"></svg>
      </aside>

      <section class="layers">
        <div class="dock"><span>Layers</span><svg class="db" viewBox="0 0 26 12"><g fill="none" stroke="#777"><rect x=".5" y=".5" width="10" height="10" rx="2" /><rect x="14.500" y=".5" width="10" height="10" rx="2" /><rect x="2.500" y="4.500" width="4" height="4" /><path d="M4.500 4.500v-2h4v4h-2" /></g><path d="M17 3l5 5M22 3l-5 5" stroke="#555" stroke-width="1.800" /></svg></div>
        <div class="ltools"><span v-for="(t, i) in layerTools" :key="i" :class="kind(t)"><svg v-if="art(t)" viewBox="0 0 16 16" v-html="art(t)"></svg></span></div>
        <div class="tree">
          <div v-for="l in layers" :key="l.n" class="node" :class="{ sel: l.sel, off: l.off }">
            <i class="chk"><svg v-if="l.c" viewBox="0 0 14 14"><path d="M3.500 6.500l2.500 4.500 5-8.500" /></svg></i>
            <i class="sw" :class="l.k"></i><b>{{ l.n }}</b>
            <svg v-if="l.sel" class="fn" viewBox="0 0 16 16" v-html="icons.funnel"></svg>
          </div>
        </div>
        <div class="tabs lt"><span class="act">Layers</span><span>Browser</span></div>
      </section>

      <div class="split"><i></i></div>
      <svg class="map" viewBox="306 142 658 594">
        <defs>
          <filter id="soft" x="306" y="142" width="658" height="594" filterUnits="userSpaceOnUse"><feGaussianBlur stdDeviation="2.500" /></filter>
          <filter id="rough" x="306" y="142" width="658" height="594" filterUnits="userSpaceOnUse"><feTurbulence type="fractalNoise" baseFrequency=".22" numOctaves="2" seed="4" /><feDisplacementMap in="SourceGraphic" scale="5" xChannelSelector="R" yChannelSelector="G" /></filter>
          <radialGradient id="spot"><stop offset="0" stop-color="#c26c14" /><stop offset=".35" stop-color="#a5601f" stop-opacity=".85" /><stop offset=".7" stop-color="#80532a" stop-opacity=".45" /><stop offset="1" stop-color="#6a4c33" stop-opacity="0" /></radialGradient>
        </defs>
        <rect x="306" y="142" width="658" height="594" fill="#494747" />
        <g fill="none" stroke="#464646" opacity=".45"><circle cx="640" cy="440" r="270" stroke-width="50" opacity=".4" /></g>
        <g filter="url(#soft)" fill="none" stroke="#a3601f" stroke-linejoin="round" stroke-linecap="round" stroke-width="11.500">
          <path v-for="(p, i) in strong" :key="i" :d="p" opacity=".95" />
          <path v-for="(c, i) in coasts" :key="'c' + i" :d="c[0]" :opacity="c[1]" />
          <path v-for="(f, i) in faint" :key="'f' + i" :d="f[0]" :opacity="f[1]" stroke-width="8" />
          <path d="M633 438v26M640 450l-6 14" opacity=".2" stroke-width="3" />
        </g>
        <circle v-for="(s, i) in spots" :key="'s' + i" :cx="s[0]" :cy="s[1]" r="8" fill="url(#spot)" :opacity="s[2]" />
        <g filter="url(#rough)">
          <g fill="#494747">
            <path v-for="(p, i) in strong" :key="i" :d="p" />
            <path :d="saMain + 'L394 355 383 348 402 310 420 270 440 240z'" />
            <path :d="'M690 173L700 185' + afMain.slice(8) + 'L800 226 813 231 815 220 802 207 768 192 735 178z'" />
            <path :d="ausMain + 'L872 561 863 581 862 595 847 615 827 635 807 655 782 665z'" />
            <path d="M815 248L823 244 832 252 846 263 822 263 814 255z" />
          </g>
          <g fill="none" stroke="#de7a14" stroke-width="1.100" stroke-linejoin="round">
            <path v-for="(p, i) in strong" :key="i" :d="p" />
            <path v-for="(c, i) in coasts" :key="'c' + i" :d="c[0]" :opacity="c[1]" />
            <path d="M433 377l5 7 3-4 4 8 3-5 4 7 4-3 3 5 5-4 5 2 4-5 3 2 3-8 4 2 4-7M474 376l6 4 5-3-4 7M452 388l8-3 10 4" />
            <path d="M522 372v7l2 3M523 358l2 3M528 365l4 10-2 8 5 8 6 5M540 404l3 6 3-3 1 7 3-5 2 8 3-4-2 9 3-2-3 8M545 404l8 4v9M591 398l5-2 3 7 2 8-4 1-4-7zM588 418l3-3 3 4-4 2zM580 419l4 1 3 5" />
            <path d="M548 440l1 8-1 8 3 4 3-4M563 465l3 8M567 478l4 10M598 494l3-2 2 3 4-1M616 486q4-1 3 5-4 2-3-5zM788 611l3-6 2 7 3-7" />
            <path d="M530 306l4-2 5 2M563 298l5 3 2 9M534 341l4-2M806 370v7h4v-7zM784 312l5 7M647 497v4M662 542l6 5M657 664l6 6M676 628l2-5" />
          </g>
        </g>
        <g fill="none" stroke="#b8702e" stroke-width=".8" opacity=".5"><path v-for="(t, i) in thin" :key="i" :d="t" /></g>
        <g fill="none" stroke="#a86a35" stroke-width=".8" opacity=".25"><path d="M407 267Q432 230 475 207M355 397Q357 366 368 337M915 490Q905 545 842 631 790 682 722 704" /><path d="M690 694h16M636 708h10" stroke="#222" /></g>
        <g fill="#e8852a"><rect v-for="(s, i) in spots" :key="'p' + i" :x="s[0] - .7" :y="s[1] - .7" width="1.500" height="1.500" :opacity="s[2] * s[2]" /></g>
      </svg>
      <div class="split r"><i></i></div>

      <section class="styling">
        <div class="dock"><span>Layer Styling</span><svg class="db" viewBox="0 0 26 12"><g fill="none" stroke="#777"><rect x=".5" y=".5" width="10" height="10" rx="2" /><rect x="14.500" y=".5" width="10" height="10" rx="2" /><rect x="2.500" y="4.500" width="4" height="4" /><path d="M4.500 4.500v-2h4v4h-2" /></g><path d="M17 3l5 5M22 3l-5 5" stroke="#555" stroke-width="1.800" /></svg></div>
        <div class="combo top"><svg viewBox="0 0 16 16" v-html="icons.line"></svg><span>ne_50m_graticules_10 copy</span><i class="tri"></i></div>
        <div class="cols">
          <div class="strip">
            <div class="cur"><svg viewBox="0 0 16 16" v-html="icons.brush"></svg></div>
            <svg v-for="t in ['lab', 'cube', 'diagt', 'hist']" :key="t" viewBox="0 0 16 16" v-html="icons[t]"></svg>
          </div>
          <div class="body">
            <div class="combo full"><svg viewBox="0 0 16 16" v-html="icons.single"></svg><span>Single symbol</span><i class="tri"></i></div>
            <div class="sym">
              <div class="stree"><div class="on"><i class="tri"></i><i class="dash"></i><b>Line</b></div><div class="kid"><i class="dash"></i>Simple line</div></div>
              <div class="prev"></div>
            </div>
            <div class="sbtns"><button v-for="(t, i) in ['badd', 'bmin', 'block', 'bdup', 'bup', 'bdn']" :key="t" :class="{ dis: i }"><svg viewBox="0 0 16 16" v-html="icons[t]"></svg></button></div>
            <div class="scroll">
              <div class="form">
                <div class="row u"><label>Unit</label><div class="combo"><span>Millimeter</span><i class="tri"></i></div></div>
                <div class="row o"><label>Opacity</label><div class="slider"><i></i></div><div class="spin"><span>100.0 %</span><em><i class="tri up dim"></i><i class="tri"></i></em></div></div>
                <div class="row c"><label>Color</label><div class="cbtn"><i></i></div><div class="cdd"><i class="tri"></i></div></div>
                <div class="row w"><label>Width</label><div class="spin"><span>0.26000</span><em><i class="tri up"></i><i class="tri"></i></em></div><svg viewBox="0 0 20 16" v-html="icons.dd"></svg></div>
                <hr>
                <div class="row s"><div class="find"><svg viewBox="0 0 16 16" v-html="icons.search"></svg><span>All Symbols</span><svg class="clr" viewBox="0 0 14 12"><path d="M5 1h8v10H5L1 6z" fill="#8b8987" /><path d="M6 3.500l5 5M11 3.500l-5 5" stroke="#fff" stroke-width="1.200" /></svg><em><i class="tri"></i></em></div><svg class="sm" viewBox="0 0 16 16" v-html="icons.style"></svg></div>
                <div class="list">
                  <svg class="pw" viewBox="0 0 309 68">
                    <svg x="7.500" y="11" width="23" height="23" viewBox="-1 -1 18 18" v-html="icons.paw"></svg>
                    <svg x="49" y="11" width="23" height="23" viewBox="-1 -1 18 18" v-html="icons.paw"></svg>
                    <g transform="rotate(35 38 54) translate(26.500 42.500)"><svg width="23" height="23" viewBox="-1 -1 18 18" v-html="icons.paw"></svg></g>
                    <path d="M18 38.500h51" stroke="#d3abd8" stroke-width="1.500" stroke-dasharray="4 5.200" />
                    <path d="M100 38.500h44" stroke="#111" stroke-width="2.600" stroke-linecap="round" stroke-dasharray="3 7" />
                    <path d="M181 38.500h44" stroke="#4580bd" stroke-width="2.600" stroke-linecap="round" stroke-dasharray="3 7" />
                  </svg>
                  <div class="sb a"><i class="tri up"></i><s></s><i class="tri"></i></div>
                </div>
              </div>
              <div class="sb b"><i class="tri up"></i><s></s><i class="tri"></i></div>
            </div>
            <div class="render"><i></i><b>Layer Rendering</b></div>
            <div class="foot"><button><svg viewBox="0 0 16 16" v-html="icons.uo"></svg></button><button><svg viewBox="0 0 16 16" v-html="icons.rg"></svg></button>
              <i class="chk"><svg viewBox="0 0 14 14"><path d="M3.500 6.500l2.500 4.500 5-8.500" /></svg></i><span>Live update</span>
              <button class="apply"><svg viewBox="0 0 16 16" v-html="icons.ok"></svg>Apply</button></div>
          </div>
        </div>
        <div class="tabs rt"><span class="act">Laye...</span><span>St...</span><span>Un...</span><span>Result...</span><span>Processing ...</span><span>Sear...</span></div>
      </section>
    </main>

    <footer class="status">
      <div class="loc"><svg viewBox="0 0 16 16" v-html="icons.search"></svg>Type to locate (Ctrl+K)</div>
      <span class="msg">1 legend entries removed.</span>
      <span class="s1">Coordinate</span><div class="inp">-3305537,1296469</div>
      <svg class="i1" viewBox="0 0 16 16" v-html="icons.mouse"></svg>
      <span class="s2">Scale</span><div class="spin sc"><span>1:84988903</span><em><i class="tri"></i></em></div>
      <svg class="i2" viewBox="0 0 16 16" v-html="icons.lock"></svg>
      <span class="s3">Magnifier</span><div class="spin mg"><span>100%</span><em><i class="tri up"></i><i class="tri"></i></em></div>
      <span class="s4">Rotation</span><div class="spin ro"><span>0.0 °</span><em><i class="tri up"></i><i class="tri"></i></em></div>
      <i class="chk"><svg viewBox="0 0 14 14"><path d="M3.500 6.500l2.500 4.500 5-8.500" /></svg></i><span class="s5">Render</span>
      <svg class="i3" viewBox="0 0 16 16" v-html="icons.globe2"></svg><span class="s6">USER:100032</span>
      <svg class="i4" viewBox="0 0 16 16" v-html="icons.bubble"></svg>
    </footer>
  </div>
</template>

<style>
html, body { margin: 0; background: #efebe7; overflow: hidden; }
</style>
<style scoped>
* { box-sizing: border-box; }
.app { width: 1366px; height: 768px; display: flex; flex-direction: column; background: #efebe7; font: 12px/16px "Noto Sans", sans-serif; color: #111; overflow: hidden; }
svg { display: block; flex: none; overflow: visible; }
i, em { font-style: normal; }
i { display: block; flex: none; }
.tri { width: 0; height: 0; border: 4px solid transparent; border-top-color: #444; border-bottom: 0; }
.tri.up { border-bottom: 4px solid #444; border-top: 0; }
.tri.dim { border-bottom-color: #aaa; }
.title { height: 24px; border-top: 3px solid #3d3c3b; background: linear-gradient(#dcdcdc, #c9c9c9); position: relative; display: flex; align-items: center; justify-content: center; padding-right: 43px; color: #6b6b6b; text-shadow: 0 1px 0 #f4f4f4; }
.title b { line-height: 18px; margin: 1px 0 0; }
.wm { position: absolute; left: 6px; top: 8px; border-width: 4px 4px 0; border-top-color: #666; }
.wb { position: absolute; right: 2px; top: 2px; width: 60px; height: 16px; }
.menu { height: 22px; display: flex; padding-left: 11px; align-items: center; border-bottom: 1px solid #cfccc8; }
.menu span { flex: none; white-space: nowrap; }
.menu u { text-underline-offset: 2px; }
.bar { display: flex; align-items: center; background: linear-gradient(#f8f5f1, #edeae6); border-bottom: 1px solid #bdbab6; }
.b1 { height: 33px; } .b2 { height: 31px; } .b3 { height: 30px; }
.bar > .grip:first-child { width: 12.5px; padding-left: 5px; }
.grip { flex: none; width: 16px; height: 16px; padding-left: 8px; display: flex; }
.grip::before, .hgrip::before, .split i { content: ""; width: 5px; height: 16px; background-image: radial-gradient(circle, #aaa7a3 .7px, transparent .9px); background-size: 3px 3px; }
.tool { flex: none; width: 25px; height: 24px; display: flex; align-items: center; justify-content: center; }
.tool svg { width: 16px; height: 16px; }
.on.tool { background: #dedad6; box-shadow: inset 0 0 0 1px #a9a6a2; border-radius: 2px; }
.arr { flex: none; width: 12px; display: flex; justify-content: center; padding-right: 2px; }
.arr::before { content: ""; border: 4.5px solid transparent; border-top: 5px solid #333; border-bottom: 0; }
.arr.off::before { border-top-color: #c0bdb9; }
.gap { width: 10px; flex: none; }
.spin, .combo, .inp, .loc, .find { flex: none; display: flex; align-items: center; border: 1px solid #aaa7a4; border-radius: 3px; background: #fff; }
.spin { padding-left: 4px; }
.spin span { flex: 1; white-space: nowrap; }
.spin em, .find em { align-self: stretch; width: 14px; border-left: 1px solid #b5b2af; background: linear-gradient(#fff, #f0eeeb); display: flex; flex-direction: column; align-items: center; justify-content: center; gap: 5px; border-radius: 0 3px 3px 0; }
.combo { background: linear-gradient(#fdfdfc, #ebe8e5); padding: 0 7px 0 5px; }
.combo span { flex: 1; white-space: nowrap; }
.combo svg { width: 16px; height: 16px; margin-right: 3px; }
.px { width: 89px; height: 23px; }
.unit { width: 69px; height: 25px; margin: 0 1px; }
.mid { flex: 1; display: flex; min-height: 0; }
.side { width: 32px; border-right: 1px solid #b3b0ac; background: linear-gradient(90deg, #f9f6f2, #edeae6); display: flex; flex-direction: column; align-items: center; padding-top: 6px; }
.side svg { width: 16px; height: 16px; margin: 4px 0; }
.side .hgrip + svg { margin-top: 0; }
.hgrip { width: 16px; height: 6px; margin-bottom: 5px; overflow: hidden; }
.hgrip::before { display: block; width: 16px; height: 6px; }
.hgrip.second { margin-top: 8px; margin-bottom: 9px; }
.layers { width: 268px; display: flex; flex-direction: column; }
.dock { height: 21px; padding-top: 1px; display: flex; justify-content: space-between; align-items: center; }
.layers .dock { padding: 1px 2px 0 4px; }
.db { width: 26px; height: 12px; }
.ltools { height: 31px; display: flex; align-items: center; padding: 0 0 3px 4px; }
.ltools .arr { padding: 0 2px 0 0; }
.ltools .on { width: 24px; }
.tree { height: 517px; width: 267px; margin-top: -1px; border: 1px solid #b9b6b2; background: #fff; }
.node { height: 19px; display: flex; align-items: center; padding-left: 23px; }
.node b { margin-left: 6px; flex: 1; white-space: nowrap; line-height: 18px; }
.node.off b { color: #a09e9c; font-style: italic; }
.node.sel { background: #308cc6; color: #e6f4ff; }
.node.sel b { text-decoration: underline; text-underline-offset: 3px; }
.fn { width: 16px; height: 16px; margin-right: 2px; }
.chk { width: 14px; height: 14px; border: 1px solid #b3aea6; background: #fff; }
.chk svg { width: 12px; height: 12px; }
.chk path { fill: none; stroke: #000; stroke-width: 2; }
.sw { width: 16px; height: 16px; margin-left: 6px; display: flex; align-items: center; justify-content: center; }
.sw.dot::before { content: ""; width: 6px; height: 6px; border-radius: 50%; background: #dc4c78; border: 1px solid #8d4359; box-sizing: content-box; }
.sw.ln::before { content: ""; width: 16px; height: 1px; background: #2a587a; }
.sw.tan::before { background: #b5aa9c; }
.sw.red::before { background: #c23b3f; }
.sw.fill { background: linear-gradient(135deg, #555, #6a6868); }
.sw.out { border: 1px solid #fbb56b; }
.tabs { display: flex; align-items: flex-start; white-space: nowrap; border-top: 1px solid #b9b6b2; }
.tabs span { flex: none; height: 24px; line-height: 24px; text-align: center; background: #dedad6; border: 1px solid #bbb8b4; border-top: 0; border-left-width: 0; border-radius: 0 0 3px 3px; }
.tabs .act { background: #f5f2ee; height: 27px; line-height: 28px; border-left-width: 1px; margin-top: -1px; }
.lt { margin: 1px 1px 0 0; }
.lt span { width: 71px; }
.lt .act { width: 61px; }
.split { width: 6px; display: flex; align-items: center; border-right: 1px solid #b5b5ae; padding-left: 1px; }
.split.r { width: 7px; border: 0; border-left: 1px solid #c5c5c0; padding-left: 2px; }
.split i { width: 3px; }
.map { width: 658px; height: 594px; margin-top: 2px; overflow: hidden; }
.styling { width: 395px; padding-left: 3px; display: flex; flex-direction: column; }
.styling .dock { padding: 1px 1px 0 1px; }
.top { width: 389px; height: 25px; margin-top: 2px; }
.cols { display: flex; margin-top: 6px; height: 511px; }
.strip { width: 38px; background: #5c5c5c; }
.strip svg { width: 15px; height: 15px; margin: 5px 0 9px 4px; }
.cur { background: #efebe7; height: 24px; overflow: hidden; }
.strip .cur svg { width: 14px; height: 14px; margin: 5px 0 0 7px; }
.body { width: 348px; margin-left: 3px; display: flex; flex-direction: column; }
.full { height: 25px; }
.sym { display: flex; margin-top: 6px; }
.stree { width: 242px; height: 119px; background: #fff; border: 1px solid #b5b2ae; }
.stree div { height: 19px; display: flex; align-items: center; }
.stree .on { background: #308cc6; color: #fff; padding-left: 4px; }
.stree .on .tri { border-width: 5px 5px 0; border-top-color: #12344b; }
.stree .on .dash { margin: 0 6px 0 9px; background: #23516f; }
.stree .kid { padding-left: 43px; }
.kid .dash { margin-right: 6px; }
.dash { width: 16px; height: 1px; background: #444; }
.prev { width: 100px; height: 1px; margin: 59px 0 0 6px; background: #4a4747; }
.sbtns { display: flex; gap: 6px; margin-top: 6px; padding-bottom: 6px; border-bottom: 1px solid #a5a29f; }
button { font: inherit; color: inherit; padding: 0; display: flex; align-items: center; justify-content: center; border: 1px solid #b0adaa; border-radius: 3px; background: linear-gradient(#fff, #eeebe8); }
.sbtns button { width: 28px; height: 24px; }
.sbtns .dis { border-color: #cac7c4; }
.sbtns svg { width: 16px; height: 16px; }
.scroll { display: flex; justify-content: space-between; margin-top: 8px; height: 256px; }
.form { width: 325px; }
.row { display: flex; align-items: center; }
.row label { white-space: nowrap; }
.u label, .c label { width: 44px; }
.u .combo { width: 281px; height: 25px; padding-right: 6px; }
.o label { width: 45px; }
.o { height: 25px; }
.slider { width: 176px; height: 5px; background: #36a1e0; border: 1px solid #2275a8; border-radius: 3px; display: flex; justify-content: flex-end; align-items: center; }
.slider i { width: 13px; height: 13px; margin-right: -1px; border: 1px solid #9b9895; border-radius: 3px; background: linear-gradient(#fff, #f2f0ee); }
.o .spin { width: 100px; height: 23px; margin-left: 4px; }
.c label { padding-top: 1px; }
.c .cbtn { width: 269px; height: 28px; border: 1px solid #b0adaa; border-radius: 3px; background: linear-gradient(#fff, #eeebe8); padding: 5px 4px; }
.cbtn i { height: 16px; border-radius: 3px; background: #4a4748; }
.cdd { width: 12px; height: 28px; border: 1px solid #b0adaa; border-radius: 3px; background: linear-gradient(#fff, #eeebe8); display: flex; align-items: center; justify-content: center; }
.cdd .tri { border-width: 5px 4.5px 0; border-top-color: #222; margin-left: -1px; }
.w { margin-top: 20px; }
.w label { width: 40px; }
.w .spin { width: 249px; height: 24px; }
.w svg { width: 20px; height: 16px; margin-left: 9px; }
hr { width: 325px; height: 1px; border: 0; margin: 23px 0 6px; background: #a5a29f; }
.find { width: 295px; height: 25px; padding-left: 10px; }
.find svg { width: 13px; height: 13px; margin-right: 6px; }
.find span { flex: 1; }
.find .clr { width: 14px; height: 12px; margin-right: 8px; }
.find em { width: 20px; }
.sm { width: 15px; height: 15px; margin-left: 11px; }
.list { height: 70px; margin-top: 4px; border: 1px solid #b5b2ae; background: #fff; display: flex; }
.pw { width: 309px; height: 68px; overflow: hidden; }
.sb { display: flex; flex-direction: column; align-items: center; justify-content: space-between; width: 14px; border-left: 1px solid #bbb8b4; padding: 5px 0; background: linear-gradient(90deg, #fff, #f1efec); position: relative; }
.sb.b { margin-right: -1px; transform: translateX(-2px); }
.sb s { position: absolute; left: 0; right: 0; background: #e1dfdc; border: solid #bbb8b4; border-width: 1px 0; }
.sb::before { content: ""; position: absolute; left: 0; right: 0; top: 13px; border-top: 1px solid #bbb8b4; }
.sb.a s { top: 40px; height: 15px; }
.sb.b s { top: 212px; height: 31px; }
.render { height: 20px; margin-top: 12px; display: flex; align-items: center; padding-left: 5px; }
.render i { border: 5.5px solid transparent; border-left: 7px solid #333; border-right: 0; }
.render b { margin-left: 9px; }
.foot { display: flex; align-items: center; margin-top: 4px; height: 26px; }
.foot button { width: 24px; height: 24px; margin-right: 6px; }
.foot button svg { width: 14px; height: 14px; }
.foot .chk { margin-left: 111px; }
.foot span { margin-left: 5px; width: 78px; white-space: nowrap; }
.foot .apply { width: 80px; height: 26px; margin: 0; padding-right: 3px; gap: 1px; }
.foot .apply svg { width: 16px; height: 16px; }
.rt { margin: 3px 0 0 -3px; }
.rt .act { width: 64px; }
.rt span:nth-child(2) { width: 45px; } .rt span:nth-child(3) { width: 55px; } .rt span:nth-child(4) { width: 73px; } .rt span:nth-child(5) { width: 100px; } .rt span:nth-child(6) { width: 58px; }
.status { height: 32px; display: flex; align-items: center; font-size: 9px; padding: 1px 0 0 4px; white-space: nowrap; }
.status > span { flex: none; margin-top: 1px; }
.loc { width: 221px; height: 26px; font-size: 12px; color: #888; padding-left: 6px; }
.loc svg { width: 16px; height: 16px; margin-right: 6px; }
.msg { width: 347px; padding-left: 8px; }
.status .s1 { width: 58px; padding-left: 8px; }
.inp { width: 91px; height: 22px; padding-left: 6px; }
.i1 { width: 16px; height: 16px; margin: 0 13px 0 5px; }
.s2 { width: 25px; }
.sc { width: 88px; height: 25px; padding-left: 3px; }
.sc em { width: 19px; }
.i2 { width: 16px; height: 16px; margin: 0 7px 0 10px; }
.s3 { width: 44px; }
.mg { width: 91px; height: 24px; }
.s4 { width: 45px; margin-left: 9px; }
.ro { width: 87px; height: 23px; }
.status .chk { margin: 0 5px 2px 6px; }
.s5 { width: 48px; }
.i3 { width: 16px; height: 16px; margin-right: 4px; }
.s6 { width: 72px; }
.i4 { width: 17px; height: 17px; }
</style>
